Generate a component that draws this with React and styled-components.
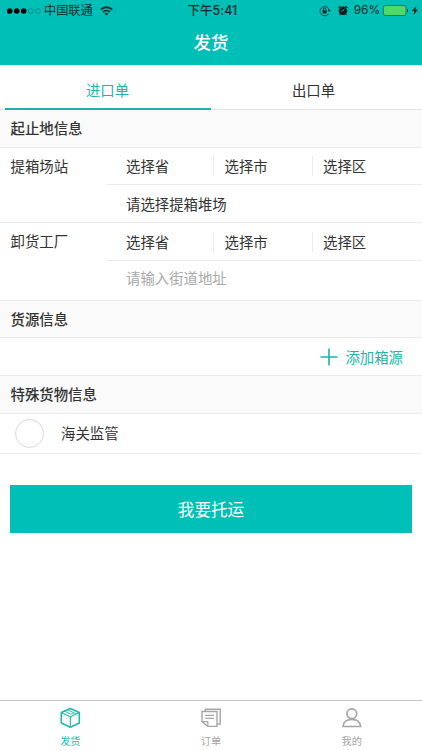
import React, { useState } from 'react'
import styled, { createGlobalStyle } from 'styled-components'

const teal = '#00bfb6';
const line = '#ebebeb';

const GlobalStyle = createGlobalStyle`
* {
    box-sizing: border-box;
}
body {
    margin: 0;
    background: #fff;
    color: #333;
    font-family: "Liberation Sans", "Noto Sans CJK SC", sans-serif;
    font-size: 14.4px;
}
button, input {
    font: inherit;
    color: inherit;
    background: none;
    border: 0;
    padding: 0;
    margin: 0;
}
`;

const Page = styled.div`
display: flex;
flex-direction: column;
height: 750px;
width: 422px;
overflow: hidden;
`;

const Header = styled.header`
height: 65px;
flex: none;
background: ${teal};
`;

const StatusBar = styled.div`
display: grid;
grid-template-columns: 1fr auto 1fr;
align-items: center;
height: 21px;
padding: 0 4px 0 7px;
color: #0b2a28;
font-size: 12.2px;
line-height: 21px;
white-space: nowrap;
`;

const StatusSide = styled.div`
display: flex;
align-items: center;
justify-content: ${(props) => (props.$end ? 'flex-end' : 'flex-start')};
font-family: Inter, "Noto Sans CJK SC", sans-serif;

svg {
    flex: none;
}
`;

const Carrier = styled.span`
margin: 0 7px 0 2px;
`;

const Clock = styled.div`
font-family: Inter, "Noto Sans CJK SC", sans-serif;
font-weight: 500;
font-size: 12.4px;
letter-spacing: 0.1px;
`;

const Percent = styled.span`
margin: 0 3px 0 6px;
font-size: 11.8px;
`;

const Title = styled.h1`
margin: 0;
color: #fff;
font-size: 17.4px;
font-weight: 500;
line-height: 44px;
text-align: center;
`;

const Tabs = styled.div`
display: flex;
flex: none;
height: 45px;
padding: 0 5px;
border-bottom: 1px solid #e4e4e4;
`;

const Tab = styled.button`
flex: 1;
height: 45px;
padding: 5px 1px 0 0;
color: ${(props) => (props.$active ? '#1bb5ab' : '#333')};
border-bottom: 2px solid ${(props) => (props.$active ? '#1bb5ab' : 'transparent')};
`;

const SectionTitle = styled.h2`
flex: none;
margin: 0;
height: ${(props) => props.$height || 38}px;
padding-left: 10.5px;
background: #fafafa;
border-bottom: 1px solid ${line};
font-size: 14.4px;
font-weight: 500;
line-height: 39px;
`;

const Address = styled.div`
display: flex;
flex: none;
border-bottom: 1px solid ${line};
`;

const AddressLabel = styled.div`
width: 106px;
padding-left: 10.5px;
line-height: 39px;
`;

const AddressFields = styled.div`
flex: 1;
`;

const Region = styled.div`
display: flex;
align-items: center;
height: ${(props) => props.$height}px;
border-bottom: 1px solid ${line};
`;

const RegionCell = styled.button`
width: ${(props) => props.$width}px;
height: 20px;
padding-left: ${(props) => props.$indent}px;
border-right: ${(props) => (props.$last ? '0' : `1px solid ${line}`)};
line-height: 22px;
text-align: left;
`;

const Yard = styled.button`
display: block;
height: 37px;
padding-left: 20px;
`;

const Street = styled.input`
display: block;
width: 100%;
height: 39px;
padding: 0 0 3px 20px;
outline: none;

&::placeholder {
    color: #a9a9a9;
    opacity: 1;
}
`;

const AddRow = styled.div`
display: flex;
flex: none;
justify-content: flex-end;
height: 38px;
padding-right: 19px;
border-bottom: 1px solid ${line};
`;

const AddButton = styled.button`
display: flex;
align-items: center;
gap: 7px;
color: #1bb5ab;
`;

const CheckRow = styled.label`
display: flex;
flex: none;
align-items: center;
gap: 17px;
height: 40px;
padding-left: 15px;
border-bottom: 1px solid ${line};
`;

const Circle = styled.span`
width: 29px;
height: 29px;
border: 1px solid #d9d9d9;
border-radius: 50%;
`;

const CheckText = styled.span`
padding-bottom: 2px;
`;

const Submit = styled.button`
flex: none;
height: 48px;
margin: 31px 10px 0;
background: ${teal};
color: #fff;
font-size: 16.6px;
`;

const TabBar = styled.nav`
display: flex;
flex: none;
height: 50px;
margin-top: auto;
border-top: 1px solid #c4c4c4;
`;

const TabBarItem = styled.button`
display: flex;
flex: 1;
flex-direction: column;
align-items: center;
padding-top: 6px;
color: ${(props) => (props.$active ? '#1fb8ae' : '#a6a6a6')};
font-size: 10.2px;
line-height: 15px;

svg {
    margin-bottom: 5px;
}
`;

const SignalDots = () => (
    <svg width="35" height="8" viewBox="0 0 35 8">
        {[2.7, 9.7, 16.7].map((x) => <circle key={x} cx={x} cy="4" r="2.8" fill="#000" />)}
        {[23.8, 31].map((x) => <circle key={x} cx={x} cy="4" r="2.4" fill="none" stroke="#087f79" strokeWidth="0.7" />)}
    </svg>
)

const Wifi = () => (
    <svg width="13" height="10" viewBox="0 0 13 10" fill="none" stroke="#0b2a28" strokeWidth="1.8">
        <path d="M0.8 3.7C4 0.4 9 0.4 12.2 3.7" />
        <path d="M3 6C5 4.1 8 4.1 10 6" />
        <path d="M4.5 7.5C5.7 6.5 7.3 6.5 8.5 7.5L6.5 9.6Z" fill="#0b2a28" stroke="none" />
    </svg>
)

const RotationLock = () => (
    <svg width="12" height="12" viewBox="0 0 12 12" fill="none" stroke="#0b2a28">
        <path d="M9.6 8.7A4.7 4.7 0 1 1 10.2 5" strokeWidth="0.8" />
        <path d="M8.7 5H11.7L10.2 7Z" fill="#0b2a28" stroke="none" />
        <rect x="3.6" y="5.2" width="4" height="3.2" fill="#0b2a28" stroke="none" />
        <path d="M4.4 5.4V4.2A1.2 1.2 0 0 1 6.8 4.2V5.4" strokeWidth="0.9" />
    </svg>
)

const Alarm = () => (
    <svg width="10" height="11" viewBox="0 0 10 11">
        <circle cx="5" cy="5.8" r="4.3" fill="#0b1c1b" />
        <path d="M0.6 2.8L2.4 1.1M9.4 2.8L7.6 1.1M2.2 9.2L1.5 10.2M7.8 9.2L8.5 10.2" stroke="#0b1c1b" strokeWidth="1.2" />
        <path d="M6.4 3.8L5 6H3.2" fill="none" stroke={teal} strokeWidth="0.8" />
    </svg>
)

const Battery = () => (
    <svg width="26" height="11" viewBox="0 0 26 11">
        <rect x="0.5" y="0.5" width="22.5" height="10" rx="1.8" fill="#4cd964" stroke="#23645b" strokeWidth="0.8" />
        <path d="M24 3.7C25.2 4 25.2 7 24 7.3Z" fill="#0b2a28" />
    </svg>
)

const Bolt = () => (
    <svg width="6" height="9" viewBox="0 0 6 9">
        <path d="M4.3 0L0 5H2.5L1.5 9L6 3.8H3.4Z" fill="#0b1c1b" />
    </svg>
)

const Plus = () => (
    <svg width="18" height="18" viewBox="0 0 18 18" stroke="currentColor" strokeWidth="1.6">
        <path d="M9 0.5V17.5M0.5 9H17.5" />
    </svg>
)

const BoxIcon = () => (
    <svg width="22" height="22" viewBox="0 0 22 22" fill="none" stroke="currentColor" strokeLinejoin="round">
        <path d="M11.3 1.5L20.3 5.6V16L11.3 20.3L2.3 16V5.6Z" strokeWidth="1.6" />
        <path d="M2.3 5.6L11.3 9.8L20.3 5.6M11.3 9.8V20.3" strokeWidth="1.1" />
        <path d="M8.6 2.8L17 6.8M5.4 4.2L11.6 7.1L14.6 5.8" strokeWidth="0.9" />
    </svg>
)

const OrderIcon = () => (
    <svg width="22" height="22" viewBox="0 0 22 22" fill="none" stroke="currentColor" strokeWidth="1.4">
        <path d="M5.3 4V2.2H20.2V17H17.2" />
        <path d="M2 4.5H17V19.4H7.8L2 14.6Z" />
        <path d="M2 14.6H7.8V19.4M5.2 8.3H14M5.2 11.3H14" strokeWidth="1.2" />
    </svg>
)

const UserIcon = () => (
    <svg width="22" height="22" viewBox="0 0 22 22" fill="none" stroke="currentColor" strokeWidth="1.7">
        <circle cx="10.8" cy="6.7" r="4.9" />
        <path d="M2 19.5C2.3 15 6 12.4 10.8 12.4S19.3 15 19.6 19.5Z" />
    </svg>
)

const bottomItems = [
    { name: '发货', Icon: BoxIcon },
    { name: '订单', Icon: OrderIcon },
    { name: '我的', Icon: UserIcon },
]

const RegionPicker = ({ height }) => (
    <Region $height={height}>
        <RegionCell $width={108} $indent={20}>选择省</RegionCell>
        <RegionCell $width={99} $indent={10.5}>选择市</RegionCell>
        <RegionCell $width={109} $indent={10} $last>选择区</RegionCell>
    </Region>
)

export default function App() {
    const [tab, setTab] = useState('进口单')

    return (
        <Page>
            <GlobalStyle />
            <Header>
                <StatusBar>
                    <StatusSide>
                        <SignalDots />
                        <Carrier>中国联通</Carrier>
                        <Wifi />
                    </StatusSide>
                    <Clock>下午5:41</Clock>
                    <StatusSide $end>
                        <RotationLock />
                        <svg width="7" height="1" />
                        <Alarm />
                        <Percent>96%</Percent>
                        <Battery />
                        <svg width="3" height="1" />
                        <Bolt />
                    </StatusSide>
                </StatusBar>
                <Title>发货</Title>
            </Header>
            <Tabs>
                {['进口单', '出口单'].map((name) => (
                    <Tab key={name} $active={tab === name} onClick={() => setTab(name)}>{name}</Tab>
                ))}
            </Tabs>

            <SectionTitle>起止地信息</SectionTitle>
            <Address>
                <AddressLabel>提箱场站</AddressLabel>
                <AddressFields>
                    <RegionPicker height={37} />
                    <Yard>请选择提箱堆场</Yard>
                </AddressFields>
            </Address>
            <Address>
                <AddressLabel>卸货工厂</AddressLabel>
                <AddressFields>
                    <RegionPicker height={38} />
                    <Street placeholder="请输入街道地址" />
                </AddressFields>
            </Address>

            <SectionTitle $height={37}>货源信息</SectionTitle>
            <AddRow>
                <AddButton>
                    <Plus />
                    添加箱源
                </AddButton>
            </AddRow>

            <SectionTitle>特殊货物信息</SectionTitle>
            <CheckRow>
                <Circle />
                <CheckText>海关监管</CheckText>
            </CheckRow>

            <Submit>我要托运</Submit>

            <TabBar>
                {bottomItems.map(({ name, Icon }, i) => (
                    <TabBarItem key={name} $active={i === 0}>
                        <Icon />
                        {name}
                    </TabBarItem>
                ))}
            </TabBar>
        </Page>
    )
}
